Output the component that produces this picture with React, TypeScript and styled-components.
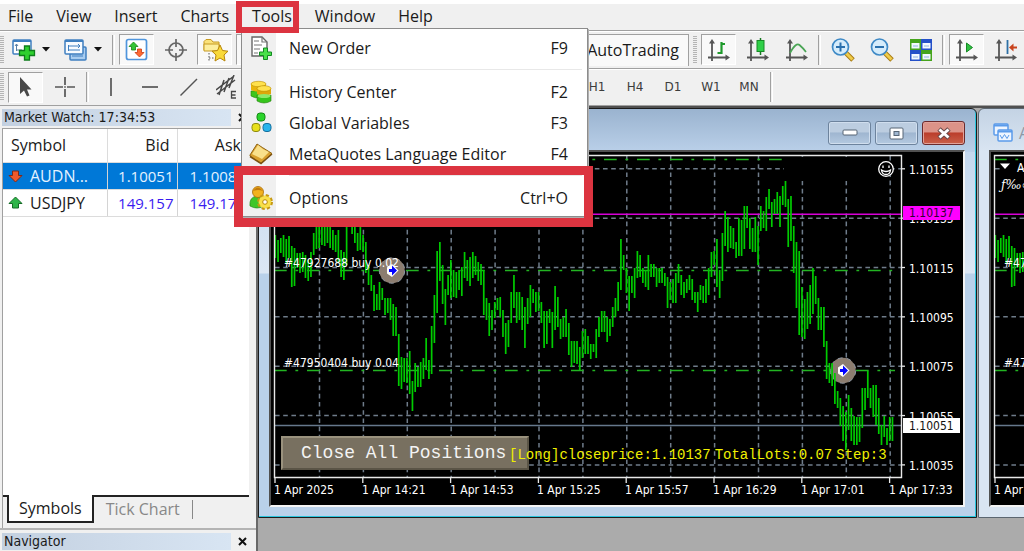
import React from "react";
import styled, { createGlobalStyle, css } from "styled-components";

const UI = `"Open Sans", "Noto Sans", sans-serif`;
const TAHOMA = `"DejaVu Sans Condensed", "DejaVu Sans", sans-serif`;
const MONO = `"Liberation Mono", monospace`;

const GlobalStyle = createGlobalStyle`
  * { box-sizing: border-box; }
  body { margin: 0; background: #f0f0f0; color: #1a1a1a; font: 16px/24px ${UI}; overflow: hidden; }
  button { font: inherit; color: inherit; border: 0; padding: 0; background: none; }
  svg { display: block; flex: none; }
`;

const Shell = styled.div`
  position: relative;
  display: flex;
  flex-direction: column;
  min-height: 100vh;
  overflow: hidden;
`;

/* ---------- menu bar ---------- */
const MenuBar = styled.nav`
  display: flex;
  align-items: flex-start;
  gap: 23px;
  height: 30px;
  padding: 0 8px;
  border-top: 4px solid #fff;
`;
const MenuTitle = styled.button`
  line-height: 24px;
  white-space: nowrap;
`;

const Dropdown = styled.div`
  position: absolute;
  z-index: 5;
  left: 241px;
  top: 28px;
  width: 347px;
  padding: 3px 0;
  border: 1px solid #8c8c8c;
  box-shadow: 1px 1px 0 #b0b0b0;
  background: linear-gradient(90deg, #f0f0f0 34px, #fff 34px);
`;
const DropItem = styled.button`
  display: grid;
  grid-template-columns: 47px 1fr auto;
  align-items: center;
  width: 100%;
  height: 31px;
  padding-right: 19px;
  text-align: left;
  white-space: nowrap;
  svg { margin-left: 7px; }
`;
const DropRule = styled.hr`
  height: 1px;
  margin: 6px 5px 6px 47px;
  border: 0;
  background: #e8e8e8;
`;
const Marker = styled.div<{ $x: number; $y: number; $w: number; $h: number; $t: number }>`
  position: absolute;
  z-index: 6;
  pointer-events: none;
  left: ${p => p.$x}px;
  top: ${p => p.$y}px;
  width: ${p => p.$w}px;
  height: ${p => p.$h}px;
  border: ${p => p.$t}px solid #dc3440;
`;

/* ---------- toolbars ---------- */
const Toolbar = styled.div<{ $h: number }>`
  display: flex;
  align-items: center;
  height: ${p => p.$h}px;
  border-top: 1px solid #a0a0a0;
  box-shadow: inset 0 1px 0 #fff;
  overflow: hidden;
`;
const Group = styled.div<{ $basis?: number }>`
  display: flex;
  align-items: center;
  gap: 4px;
  flex: none;
  ${p => p.$basis && css`width: ${p.$basis}px;`}
`;
const Grip = styled.span`
  width: 4px;
  height: 28px;
  flex: none;
  background: repeating-linear-gradient(#b4b4b4 0 1px, #f0f0f0 1px 2px);
`;
const Sep = styled.span`
  width: 3px;
  height: 30px;
  flex: none;
  border-left: 1px solid #a0a0a0;
  border-right: 1px solid #fff;
`;
const ToolButton = styled.button<{ $on?: boolean }>`
  display: flex;
  align-items: center;
  justify-content: center;
  width: 35px;
  height: 31px;
  border: 1px solid transparent;
  ${p => p.$on && css`
    background: #f9f9f9;
    border-color: #a0a0a0 #fff #fff #a0a0a0;
  `}
`;
const SplitButton = styled.button`
  display: flex;
  align-items: center;
  gap: 6px;
  width: 48px;
  height: 31px;
  padding-left: 4px;
`;
const AutoButton = styled.button`
  width: 126px;
  height: 32px;
  padding-right: 9px;
  text-align: right;
  background: #f9f9f9;
  border-top: 1px solid #a0a0a0;
  border-right: 1px solid #a0a0a0;
`;
const FrameButton = styled.button`
  width: 34px;
  height: 28px;
  font: 12px/28px "DejaVu Sans", sans-serif;
  color: #3c3c3c;
`;

/* ---------- side panel ---------- */
const Main = styled.div`
  display: flex;
  flex: 1;
  border-top: 1px solid #a0a0a0;
`;
const Side = styled.aside`
  display: flex;
  flex-direction: column;
  width: 256px;
  flex: none;
  padding: 3px 0 0 2px;
`;
const Caption = styled.header`
  display: flex;
  align-items: center;
  justify-content: space-between;
  height: 17px;
  margin-right: 8px;
  padding-left: 2px;
  font: 14px/17px "DejaVu Sans", sans-serif;
  font-family: ${TAHOMA};
  background: linear-gradient(90deg, #c3d0e0, #d8e5f3 229px, #f0f0f0 229px);
`;
const CloseGlyph = styled.button`
  display: flex;
  width: 12px;
  justify-content: center;
`;
const WatchList = styled.div`
  flex: 1;
  margin: 2px 7px 0 0;
  border: solid #a0a0a0;
  border-width: 1px 0 0 1px;
  background: #fff;
`;
const Quotes = styled.table`
  width: 100%;
  border-collapse: collapse;
  table-layout: fixed;
`;
const HeadCell = styled.th<{ $right?: boolean }>`
  height: 33px;
  padding: 0 ${p => (p.$right ? 7 : 8)}px;
  border-right: 1px solid #dcdcdc;
  border-bottom: 1px solid #dcdcdc;
  font-weight: 400;
  text-align: ${p => (p.$right ? "right" : "left")};
`;
const QuoteRow = styled.tr<{ $active?: boolean }>`
  td { color: ${p => (p.$active ? "#e4f2ff" : "#3a1cf0")}; }
  th { color: ${p => (p.$active ? "#e4f2ff" : "#1a1a1a")}; }
  background: ${p => (p.$active ? "#0078d7" : "#fff")};
`;
const QuoteCell = styled.td`
  height: 27px;
  padding: 0 3px 0 0;
  border-right: 1px solid #d4d4d4;
  border-bottom: 1px solid #dcdcdc;
  text-align: right;
  font-size: 15px;
`;
const SymbolCell = styled.th`
  height: 27px;
  padding: 0 0 0 5px;
  border-right: 1px solid #d4d4d4;
  border-bottom: 1px solid #dcdcdc;
  font-weight: 400;
  div { display: flex; align-items: center; gap: 7px; }
`;
const Tabs = styled.div`
  display: flex;
  margin-right: 7px;
  height: 33px;
  border-left: 1px solid #a0a0a0;
  background: linear-gradient(#222, #222) 0 0 / 100% 2px no-repeat;
`;
const Tab = styled.button<{ $on?: boolean }>`
  height: 28px;
  padding: 0 ${p => (p.$on ? 10 : 12)}px;
  white-space: nowrap;
  color: #888;
  ${p => p.$on && css`
    margin-left: 4px;
    color: #1a1a1a;
    background: #fff;
    border: 2px solid #222;
    border-top: 0;
  `}
`;
const TabEnd = styled.span`
  width: 1px;
  height: 19px;
  margin-top: 5px;
  background: #888;
`;
const Dock = styled.section`
  height: 23px;
  margin-left: -2px;
  padding: 3px 0 0 2px;
  border-top: 2px solid #b4b4b4;
`;

/* ---------- chart windows ---------- */
const Desktop = styled.main`
  position: relative;
  flex: 1;
  min-width: 0;
  overflow: hidden;
  border-left: 2px solid #696969;
  border-top: 2px solid #505050;
  background: #ababab;
`;
const ChartWindow = styled.section<{ $left: number; $active?: boolean }>`
  position: absolute;
  top: 0;
  left: ${p => p.$left}px;
  width: 719px;
  padding: 0 10px 10px;
  border: 1px solid ${p => (p.$active ? "#1c1c1c" : "#5c6670")};
  border-radius: 6px 6px 0 0;
  ${p =>
    p.$active
      ? css`
          background: linear-gradient(#9ab3cf 0, #bad0e9 43px, #c4d8ee 43px, #dce7f4 164px, #b9d1ea 165px);
          box-shadow: inset -1px -1px 0 #28c4dc;
        `
      : css`
          background: linear-gradient(#c4d3e4 0, #d9e5f2 43px);
        `}
`;
const TitleBar = styled.header<{ $active?: boolean }>`
  display: flex;
  align-items: center;
  justify-content: ${p => (p.$active ? "flex-end" : "flex-start")};
  gap: ${p => (p.$active ? 4 : 6)}px;
  height: 41px;
  padding: 7px 1px 0 4px;
  color: #8c98a6;
`;
const WinButton = styled.button<{ $close?: boolean }>`
  display: flex;
  align-items: center;
  justify-content: center;
  width: 43px;
  height: 24px;
  border: 1px solid ${p => (p.$close ? "#6b2a2c" : "#6d839d")};
  border-radius: 3px;
  box-shadow: inset 0 0 0 1px ${p => (p.$close ? "#e2a29a" : "#d0deee")};
  background: ${p =>
    p.$close
      ? "linear-gradient(#dc9388 0 45%, #bb3d2b 50%, #c9604a)"
      : "linear-gradient(#bccde0 0 45%, #9fb6d0 50%, #b4c9e0)"};
`;
const Client = styled.div`
  position: relative;
  width: 696px;
  border: 2px solid #505050;
  border-right-color: #f4f4f4;
  border-bottom-color: #f4f4f4;
  background: #000;
`;
const CloseAll = styled.button`
  position: absolute;
  left: 10px;
  top: 284px;
  width: 248px;
  height: 34px;
  border: 2px solid;
  border-color: #9a927e #5a5446 #5a5446 #9a927e;
  padding-left: 18px;
  background: #787060;
  color: #f4f4f4;
  font: 18px/30px ${MONO};
  text-align: left;
  white-space: nowrap;
`;
const Readout = styled.div`
  position: absolute;
  left: 238px;
  top: 293px;
  display: flex;
  gap: 4px;
  color: #f0f000;
  font: 14px/20px ${MONO};
  white-space: nowrap;
`;

/* high/low of every bar, left to right */
const BARS: number[][] = [
  [235,258],[240,262],[238,253],[235,257],[239,263],[236,258],[246,287],[248,286],[253,268],[253,273],
  [252,272],[255,278],[260,281],[252,277],[233,255],[225,249],[222,248],[222,245],[222,246],[222,243],
  [222,248],[230,250],[235,252],[230,263],[250,277],[252,280],[222,265],[221,226],[222,234],[222,243],
  [233,251],[226,250],[235,252],[242,273],[265,285],[275,291],[285,311],[294,310],[282,310],[288,300],
  [298,315],[298,313],[298,320],[304,336],[307,336],[334,386],[357,389],[358,382],[358,383],[351,394],
  [381,411],[363,392],[367,387],[362,387],[358,379],[338,370],[360,379],[326,374],[295,343],[251,313],
  [242,281],[265,304],[289,325],[275,295],[260,298],[270,297],[272,298],[270,290],[267,296],[252,278],
  [260,281],[257,286],[252,278],[256,275],[262,281],[264,285],[270,315],[298,320],[303,336],[310,330],
  [302,318],[298,310],[297,317],[310,337],[323,354],[320,347],[292,323],[275,308],[292,323],[292,320],
  [297,330],[307,348],[298,324],[285,317],[289,303],[292,312],[292,311],[302,323],[311,348],[311,344],
  [309,323],[312,348],[286,330],[297,327],[319,339],[317,337],[309,337],[323,355],[341,367],[341,363],
  [341,364],[347,370],[331,358],[329,354],[336,354],[344,359],[344,352],[329,358],[317,337],[311,332],
  [311,332],[317,342],[319,336],[307,327],[298,317],[282,311],[239,290],[255,270],[268,293],[276,311],
  [276,293],[268,298],[251,278],[255,277],[268,283],[270,287],[255,290],[264,277],[264,277],[268,287],
  [268,283],[268,283],[273,286],[277,308],[282,300],[279,303],[273,303],[264,283],[275,295],[282,298],
  [279,293],[275,290],[279,300],[292,303],[292,312],[285,300],[286,303],[279,303],[268,295],[252,277],
  [251,265],[239,287],[270,298],[233,281],[211,246],[217,252],[226,248],[228,249],[242,258],[218,256],
  [220,256],[206,249],[206,228],[218,249],[228,252],[217,252],[226,265],[206,231],[211,228],[197,231],
  [189,209],[202,227],[199,214],[192,214],[196,227],[186,205],[181,207],[199,247],[196,241],[226,273],
  [242,308],[251,335],[287,337],[299,339],[292,329],[285,324],[268,314],[276,304],[298,330],[307,330],
  [307,347],[341,379],[363,383],[363,386],[373,404],[391,408],[398,426],[406,441],[412,450],[395,430],
  [408,441],[416,445],[417,445],[417,442],[388,428],[388,410],[371,398],[388,408],[385,417],[385,425],
  [398,434],[425,445],[416,437],[428,445],[417,441],[417,441],
];
const PRICES = ["1.10155", "1.10135", "1.10115", "1.10095", "1.10075", "1.10055", "1.10035"];
const TIMES = ["2025", "14:21", "14:53", "15:25", "15:57", "16:29", "17:01", "17:33"];

const Halo = ({ x, y }: { x: number; y: number }) => (
  <circle cx={x} cy={y} r="12.7" fill="#8c7d70" stroke="#8d97a3" strokeDasharray="5 4" />
);
const Entry = ({ x, y }: { x: number; y: number }) => (
  <g>
    <path d={`M${x} ${y - 6.5}L${x + 6.5} ${y}L${x} ${y + 6.5}L${x - 5} ${y + 3}V${y - 3}Z`} fill="#fff" />
    <path d={`M${x - 3} ${y - 1.5}H${x}V${y - 5}L${x + 5} ${y}L${x} ${y + 5}V${y + 1.5}H${x - 3}Z`} fill="#00f" />
  </g>
);

const PriceChart = ({ legend }: { legend?: boolean }) => (
  <svg width="692" height="353" viewBox="271 152 692 353" fontFamily={TAHOMA} fontSize="12" fill="#fff">
    <g stroke="#6f7c8a" strokeWidth="1.5" strokeDasharray="4.6 3.6">
      {PRICES.map((_, i) => <path key={i} d={`M275 ${168.8 + i * 49.35}H901`} />)}
      {Array.from({ length: 14 }, (_, i) => <path key={i} d={`M${319.5 + i * 43.9} 156V477`} />)}
    </g>
    {!legend && <path d="M784 157H880V181H784Z" fill="#000" />}
    <path d="M275 425.5H901" stroke="#66788c" strokeWidth="1.3" />
    <path d="M275 214.3H901" stroke="#d800d8" strokeWidth="1.6" />
    <Halo x={392} y={270.5} />
    <Halo x={843} y={370.5} />
    <g stroke="#22b422" strokeWidth="1.5" strokeDasharray="12.7 8.7 2.8 8.8">
      <path d={legend ? "M274 159.5H901" : "M274 159.5H783"} />
      <path d="M274 270.5H379M406 270.5H895" />
      <path d="M274 370.5H830M856 370.5H895" />
    </g>
    <path
      d={BARS.map(([hi, lo], i) => `M${(275.3 + i * 2.743).toFixed(2)} ${hi}V${lo}`).join("")}
      stroke="#00cc00"
      strokeWidth="1.7"
    />
    <text x="284" y="267">#47927688 buy 0.02</text>
    <text x="284" y="367">#47950404 buy 0.04</text>
    <Entry x={392} y={270.5} />
    <Entry x={843} y={370.5} />
    <path d="M274.5 155.5H901.5V477.5H274.5Z" fill="none" stroke="#e8e8e8" strokeWidth="1.4" />
    <g stroke="#e8e8e8" strokeWidth="1.3">
      {PRICES.map((_, i) => <path key={i} d={`M902 ${168.8 + i * 49.35}H905`} />)}
      {TIMES.map((_, i) => <path key={i} d={`M${275 + i * 87.8} 478V483`} />)}
    </g>
    {PRICES.map((p, i) => <text key={p} x="909" y={174 + Math.round(i * 49.35)}>{p}</text>)}
    {TIMES.map((t, i) => <text key={t} x={274 + Math.round(i * 87.8)} y="494">{`1 Apr ${t}`}</text>)}
    <path d="M903 206H960V220H903Z" fill="#f0f" />
    <text x="909" y="217" fill="#300030">1.10137</text>
    <path d="M903 418H960V433H903Z" fill="#fff" />
    <text x="909" y="430" fill="#111">1.10051</text>
    {legend ? (
      <g>
        <path d="M280 161H298V176H280Z" fill="#000" />
        <path d="M280 163.5H290L285 169Z" />
        <text x="297" y="172">AUDNZD,M1</text>
        <text x="281" y="189" fontFamily="DejaVu Serif" fontStyle="italic">ƒ‰∞</text>
      </g>
    ) : (
      <g fill="none" stroke="#fff" strokeWidth="1.3">
        <circle cx="886" cy="169" r="7.3" fill="#000" />
        <path d="M881.5 170Q882 174.5 886 174.5T890.5 170Q886 173 881.5 170ZM883 165.5V168M889 165.5V168" />
      </g>
    )}
  </svg>
);

/* ---------- icons ---------- */
const Caret = () => <svg width="8" height="5"><path d="M0 0H8L4 4.5Z" fill="#111" /></svg>;
const Axes = () => (
  <g stroke="#555" fill="#555">
    <path d="M5 4V23M1 19.5H20" strokeWidth="1.8" fill="none" />
    <path d="M5 1L8 5.5H2ZM23 19.5L18.5 16.5V22.5Z" stroke="none" />
  </g>
);
const IconNewChart = () => (
  <svg width="24" height="24">
    <rect x="1" y="2" width="18" height="14" rx="1" fill="#fff" stroke="#3f7fc0" strokeWidth="1.5" />
    <path d="M1 3H19" stroke="#3f7fc0" strokeWidth="2" />
    <path d="M4.5 6V13M4.5 12H10M3 8L4.5 6L6 8" stroke="#5a7fa5" fill="none" />
    <path d="M12.5 8H17.5V12.5H22.5V17.5H17.5V22H12.5V17.5H7.5V12.5H12.5Z" fill="#2fd02f" stroke="#0f7d1c" strokeWidth="1.3" />
  </svg>
);
const IconProfiles = () => (
  <svg width="24" height="24" fill="#f7fbff" stroke="#3f7fc0" strokeWidth="1.5">
    <rect x="6" y="9" width="16" height="13" rx="1" fill="#a9cdf0" />
    <rect x="1" y="2" width="18" height="14" rx="1" />
    <path d="M1 3H19" strokeWidth="2" />
    <path d="M4.5 7V13M4 8H16M4 12H16M14 6L16 8L14 10M8 18H19" fill="none" strokeWidth="1" />
  </svg>
);
const IconMarket = () => (
  <svg width="24" height="24">
    <rect x="1.5" y="1.5" width="20" height="20" rx="2" fill="#fff" stroke="#4f95dc" strokeWidth="1.7" />
    <path d="M8.5 4L13 8.5H10.5V12H6.5V8.5H4Z" fill="#35c535" stroke="#158515" strokeWidth=".8" />
    <path d="M14.5 19L10 14.5H12.5V11H16.5V14.5H19Z" fill="#ff6a33" stroke="#c93a10" strokeWidth=".8" />
  </svg>
);
const IconTarget = () => (
  <svg width="24" height="24" fill="none" stroke="#666" strokeWidth="1.7">
    <circle cx="12" cy="12" r="7" />
    <path d="M12 1V9M12 15V23M1 12H9M15 12H23" />
  </svg>
);
const IconFavorites = () => (
  <svg width="26" height="24">
    <path d="M2 12V3.5L4 1.5H9L11 4H17V12Z" fill="#fbe27a" stroke="#c79a22" />
    <path d="M2 6H17V13H2Z" fill="#fdee9d" stroke="#c79a22" />
    <path d="M7 15V23M7 20H12" stroke="#555" strokeDasharray="1.5 1.5" />
    <path d="M18 7L20.5 12.5L26 13.2L22 17L23 23L18 20L13 23L14 17L10 13.2L15.5 12.5Z" fill="#f9d93a" stroke="#b8860b" />
  </svg>
);
const IconBars = () => (
  <svg width="24" height="24"><Axes /><path d="M10.5 15H14.5V4M14 6H18" stroke="#1f9a2c" strokeWidth="2.2" fill="none" /></svg>
);
const IconCandles = () => (
  <svg width="24" height="24"><Axes /><path d="M14.5 0V17" stroke="#167a20" strokeWidth="1.5" /><rect x="11" y="2.5" width="7" height="11" fill="#2fd048" stroke="#168a25" /></svg>
);
const IconLine = () => (
  <svg width="24" height="24"><Axes /><path d="M5 15Q11 4 14.5 7T21 14" stroke="#4aa555" strokeWidth="1.7" fill="none" /></svg>
);
const IconZoom = ({ plus }: { plus?: boolean }) => (
  <svg width="24" height="24">
    <path d="M14 14L22 22" stroke="#a87b12" strokeWidth="5" />
    <path d="M14.5 14.5L21.5 21.5" stroke="#f0cc4a" strokeWidth="3" />
    <circle cx="9.5" cy="9" r="8" fill="#d5ecfb" stroke="#3f8ac6" strokeWidth="1.7" />
    <path d={plus ? "M5 9H14M9.5 4.5V13.5" : "M5 9H14"} stroke="#2a70ad" strokeWidth="2" />
  </svg>
);
const IconTiles = () => (
  <svg width="24" height="24">
    <path d="M1 1H12V12H1ZM12 12H23V23H12Z" fill="#45a41c" />
    <path d="M12 1H23V12H12ZM1 12H12V23H1Z" fill="#2450c8" />
    <path d="M2.5 5H10.5V10.5H2.5ZM13.5 5H21.5V10.5H13.5ZM2.5 16H10.5V21.5H2.5ZM13.5 16H21.5V21.5H13.5Z" fill="#f2f8ff" />
    <path d="M4 8H9M15 8H20M4 19H9M15 19H20" stroke="#8fb3e0" />
  </svg>
);
const IconScroll = () => (
  <svg width="24" height="24"><Axes /><path d="M11.5 5L17.5 9.5L11.5 14Z" fill="#2fc041" stroke="#168a25" /></svg>
);
const IconShift = () => (
  <svg width="24" height="24"><Axes /><path d="M13.5 2V16" stroke="#2d6fa5" strokeWidth="1.8" /><path d="M15 9.5L19.5 5.5V8.5H23V10.5H19.5V13.5Z" fill="#c8431d" /></svg>
);
const Lines = ({ d, w = 1.7 }: { d: string; w?: number }) => (
  <svg width="24" height="24" fill="none" stroke="#555" strokeWidth={w}><path d={d} /></svg>
);
const IconCursor = () => (
  <svg width="24" height="24"><path d="M6 2V19L10 15.5L13 21.5L15.5 20.5L13 14.5H17.5Z" fill="#484848" /></svg>
);
const IconFibo = () => (
  <svg width="24" height="24" fill="none" stroke="#484848">
    <path d="M0 15L18 1M1 19L19 5M3 20L8 5M8 17L13 3M13 13L18 0" strokeWidth="1.5" />
    <path d="M20 16.5H15.5V23H20M15.5 20H19.5" strokeWidth="1.3" />
  </svg>
);
const IconOrder = () => (
  <svg width="24" height="26">
    <path d="M3 2H13L18 7V21H3Z" fill="#fff" stroke="#666" strokeWidth="1.4" />
    <path d="M13 2V7H18M5 6H10M5 10H13M5 14H11M5 18H9" stroke="#777" strokeWidth="1.2" fill="none" />
    <path d="M14.5 13H18.5V17H22.5V20.5H18.5V24.5H14.5V20.5H10.5V17H14.5Z" fill="#4be04b" stroke="#128a22" />
  </svg>
);
const IconHistory = () => (
  <svg width="24" height="24">
    <path d="M2 11V16Q6 19 12 17V11Z" fill="#3fc61e" stroke="#25800f" strokeWidth=".6" />
    <path d="M2 4V10Q7 13 17 10V4Z" fill="#e9b50c" />
    <ellipse cx="9.5" cy="4" rx="7.5" ry="2.7" fill="#ffe14d" stroke="#b98b00" strokeWidth=".6" />
    <path d="M8 8V14Q15 18 22 14V8Z" fill="#dca70a" />
    <path d="M8 15V21Q15 25 22 21V15Q15 19 8 15Z" fill="#36c51c" stroke="#25800f" strokeWidth=".6" />
    <ellipse cx="15" cy="8.5" rx="7" ry="2.8" fill="#ffe14d" stroke="#b98b00" strokeWidth=".6" />
    <ellipse cx="15" cy="16" rx="6.5" ry="2" fill="#8ee86a" />
  </svg>
);
const IconVariables = () => (
  <svg width="24" height="24">
    <rect x="8" y="2" width="8" height="8" rx="3" fill="#2bd42b" stroke="#158a15" />
    <rect x="3" y="12.5" width="8" height="8" rx="3" fill="#e8e01c" stroke="#8e8a10" />
    <rect x="14" y="12.5" width="8" height="8" rx="3" fill="#28b4ec" stroke="#146e9c" />
  </svg>
);
const IconEditor = () => (
  <svg width="24" height="24">
    <path d="M1 13L8 2Q14 6 19 9L23 11.5L12 21.5Q7 18 1 14Z" fill="#d9a02e" stroke="#8f6414" />
    <path d="M3 12L9 3Q14 8 20 10L13 17Q7 14 3 12Z" fill="#f9e08a" />
    <path d="M1 14.5L12 21.5L23 12" stroke="#7c5210" strokeWidth="1.5" fill="none" />
  </svg>
);
const IconOptions = () => (
  <svg width="24" height="26">
    <path d="M1 21Q0 12 8 11Q16 12 15 21Q8 25 1 21Z" fill="#3fc62a" stroke="#238a16" strokeWidth=".7" />
    <circle cx="9" cy="7" r="5.5" fill="#f2b21e" stroke="#a86a08" strokeWidth=".8" />
    <path d="M4 6Q9 -1 14 6Q9 4 4 6Z" fill="#c27a0c" />
    <circle cx="16" cy="17" r="6.5" fill="#f7dc3c" stroke="#c79a14" strokeWidth="3" strokeDasharray="3 2.1" />
    <circle cx="16" cy="17" r="6" fill="#f9e04a" />
    <circle cx="16" cy="17" r="2.3" fill="#fff" stroke="#b8860b" />
  </svg>
);
const IconArrow = ({ down }: { down?: boolean }) => (
  <svg width="15" height="14">
    <path
      d={down ? "M7.5 13L1 6.5H4.5V2H10.5V6.5H14Z" : "M7.5 1L14 7.5H10.5V12H4.5V7.5H1Z"}
      fill={down ? "#f0592b" : "#2fb54a"}
      stroke={down ? "#7e2a18" : "#136b25"}
    />
  </svg>
);
const IconClose = () => <svg width="9" height="9"><path d="M1 1L8 8M8 1L1 8" stroke="#111" strokeWidth="2" /></svg>;
const IconChartWindow = () => (
  <svg width="20" height="20" fill="#eef5ff" stroke="#5b9bea" strokeWidth="1.5">
    <rect x="1" y="1" width="14" height="11" rx="1" />
    <path d="M1 2.5H15" strokeWidth="2" />
    <rect x="5" y="7" width="14" height="11" rx="1" />
    <path d="M5 8.5H19" strokeWidth="2" />
    <path d="M7 12L9 15.5L11.5 11.5L14 15.5L16 12" fill="none" strokeWidth="1" />
  </svg>
);

const MENUS = ["File", "View", "Insert", "Charts", "Tools", "Window", "Help"];
const FRAMES = ["H1", "H4", "D1", "W1", "MN"];

const DropEntry = ({ icon, label, keys }: { icon: React.ReactNode; label: string; keys: string }) => (
  <DropItem role="menuitem">
    {icon}
    <span>{label}</span>
    <span>{keys}</span>
  </DropItem>
);

export default function App() {
  return (
    <Shell>
      <GlobalStyle />
      <MenuBar>{MENUS.map(m => <MenuTitle key={m}>{m}</MenuTitle>)}</MenuBar>

      <Toolbar $h={38}>
        <Group $basis={563}>
          <Grip />
          <SplitButton aria-label="New chart"><IconNewChart /><Caret /></SplitButton>
          <SplitButton aria-label="Profiles"><IconProfiles /><Caret /></SplitButton>
          <Sep />
          <ToolButton $on aria-label="Market Watch"><IconMarket /></ToolButton>
          <ToolButton aria-label="Data Window"><IconTarget /></ToolButton>
          <ToolButton $on aria-label="Navigator"><IconFavorites /></ToolButton>
          <ToolButton $on aria-label="Terminal" />
        </Group>
        <Group>
          <AutoButton>AutoTrading</AutoButton>
          <Grip />
          <ToolButton $on aria-label="Bar chart"><IconBars /></ToolButton>
          <ToolButton aria-label="Candlesticks"><IconCandles /></ToolButton>
          <ToolButton aria-label="Line chart"><IconLine /></ToolButton>
          <Sep />
          <ToolButton aria-label="Zoom in"><IconZoom plus /></ToolButton>
          <ToolButton aria-label="Zoom out"><IconZoom /></ToolButton>
          <ToolButton aria-label="Tile windows"><IconTiles /></ToolButton>
          <Sep />
          <ToolButton $on aria-label="Auto scroll"><IconScroll /></ToolButton>
          <ToolButton aria-label="Chart shift"><IconShift /></ToolButton>
        </Group>
      </Toolbar>

      <Toolbar $h={37}>
        <Group $basis={580}>
          <Grip />
          <ToolButton $on aria-label="Cursor"><IconCursor /></ToolButton>
          <ToolButton aria-label="Crosshair"><Lines d="M12 2V10M12 14V22M2 12H10M14 12H22M11.2 12H12.8" /></ToolButton>
          <Sep />
          <ToolButton aria-label="Vertical line"><Lines d="M12 3V21" /></ToolButton>
          <ToolButton aria-label="Horizontal line"><Lines d="M4 12H20" /></ToolButton>
          <ToolButton aria-label="Trendline"><Lines d="M3.5 20.5L20 4" w={1.5} /></ToolButton>
          <ToolButton aria-label="Channel"><IconFibo /></ToolButton>
        </Group>
        <Group>
          {FRAMES.map(f => <FrameButton key={f}>{f}</FrameButton>)}
          <Sep />
        </Group>
      </Toolbar>

      <Main>
        <Side>
          <Caption>
            Market Watch: 17:34:53
            <CloseGlyph aria-label="Close Market Watch"><IconClose /></CloseGlyph>
          </Caption>
          <WatchList>
            <Quotes>
              <colgroup><col width="104" /><col width="70" /><col /></colgroup>
              <thead>
                <tr><HeadCell>Symbol</HeadCell><HeadCell $right>Bid</HeadCell><HeadCell $right>Ask</HeadCell></tr>
              </thead>
              <tbody>
                <QuoteRow $active>
                  <SymbolCell scope="row"><div><IconArrow down />AUDN...</div></SymbolCell>
                  <QuoteCell>1.10051</QuoteCell>
                  <QuoteCell>1.10086</QuoteCell>
                </QuoteRow>
                <QuoteRow>
                  <SymbolCell scope="row"><div><IconArrow />USDJPY</div></SymbolCell>
                  <QuoteCell>149.157</QuoteCell>
                  <QuoteCell>149.171</QuoteCell>
                </QuoteRow>
              </tbody>
            </Quotes>
          </WatchList>
          <Tabs>
            <Tab $on>Symbols</Tab>
            <Tab>Tick Chart</Tab>
            <TabEnd />
          </Tabs>
          <Dock>
            <Caption>
              Navigator
              <CloseGlyph aria-label="Close Navigator"><IconClose /></CloseGlyph>
            </Caption>
          </Dock>
        </Side>

        <Desktop>
          <ChartWindow $left={0} $active>
            <TitleBar $active>
              <WinButton aria-label="Minimize">
                <svg width="16" height="8"><rect x="1" y="1" width="14" height="5" rx="1" fill="#fff" stroke="#566575" /></svg>
              </WinButton>
              <WinButton aria-label="Restore">
                <svg width="16" height="13"><rect x="1" y="1" width="13" height="11" rx="1" fill="#fff" stroke="#566575" /><rect x="5" y="4.5" width="5" height="4" fill="#9fb6d0" stroke="#566575" /></svg>
              </WinButton>
              <WinButton $close aria-label="Close">
                <svg width="16" height="13"><path d="M3 2L13 11M13 2L3 11" stroke="#6a4a4a" strokeWidth="5" /><path d="M3.5 2.5L12.5 10.5M12.5 2.5L3.5 10.5" stroke="#fff" strokeWidth="3" /></svg>
              </WinButton>
            </TitleBar>
            <Client>
              <PriceChart />
              <CloseAll>Close All Positions</CloseAll>
              <Readout>
                <span>[Long]closeprice:1.10137</span>
                <span>TotalLots:0.07</span>
                <span>Step:3</span>
              </Readout>
            </Client>
          </ChartWindow>
          <ChartWindow $left={720}>
            <TitleBar><IconChartWindow />AUDNZD,M1</TitleBar>
            <Client><PriceChart legend /></Client>
          </ChartWindow>
        </Desktop>
      </Main>

      <Dropdown role="menu">
        <DropEntry icon={<IconOrder />} label="New Order" keys="F9" />
        <DropRule />
        <DropEntry icon={<IconHistory />} label="History Center" keys="F2" />
        <DropEntry icon={<IconVariables />} label="Global Variables" keys="F3" />
        <DropEntry icon={<IconEditor />} label="MetaQuotes Language Editor" keys="F4" />
        <DropRule />
        <DropEntry icon={<IconOptions />} label="Options" keys="Ctrl+O" />
      </Dropdown>
      <Marker $x={236} $y={1} $w={63} $h={32} $t={6} />
      <Marker $x={234} $y={166} $w={359} $h={61} $t={9} />
    </Shell>
  );
}
